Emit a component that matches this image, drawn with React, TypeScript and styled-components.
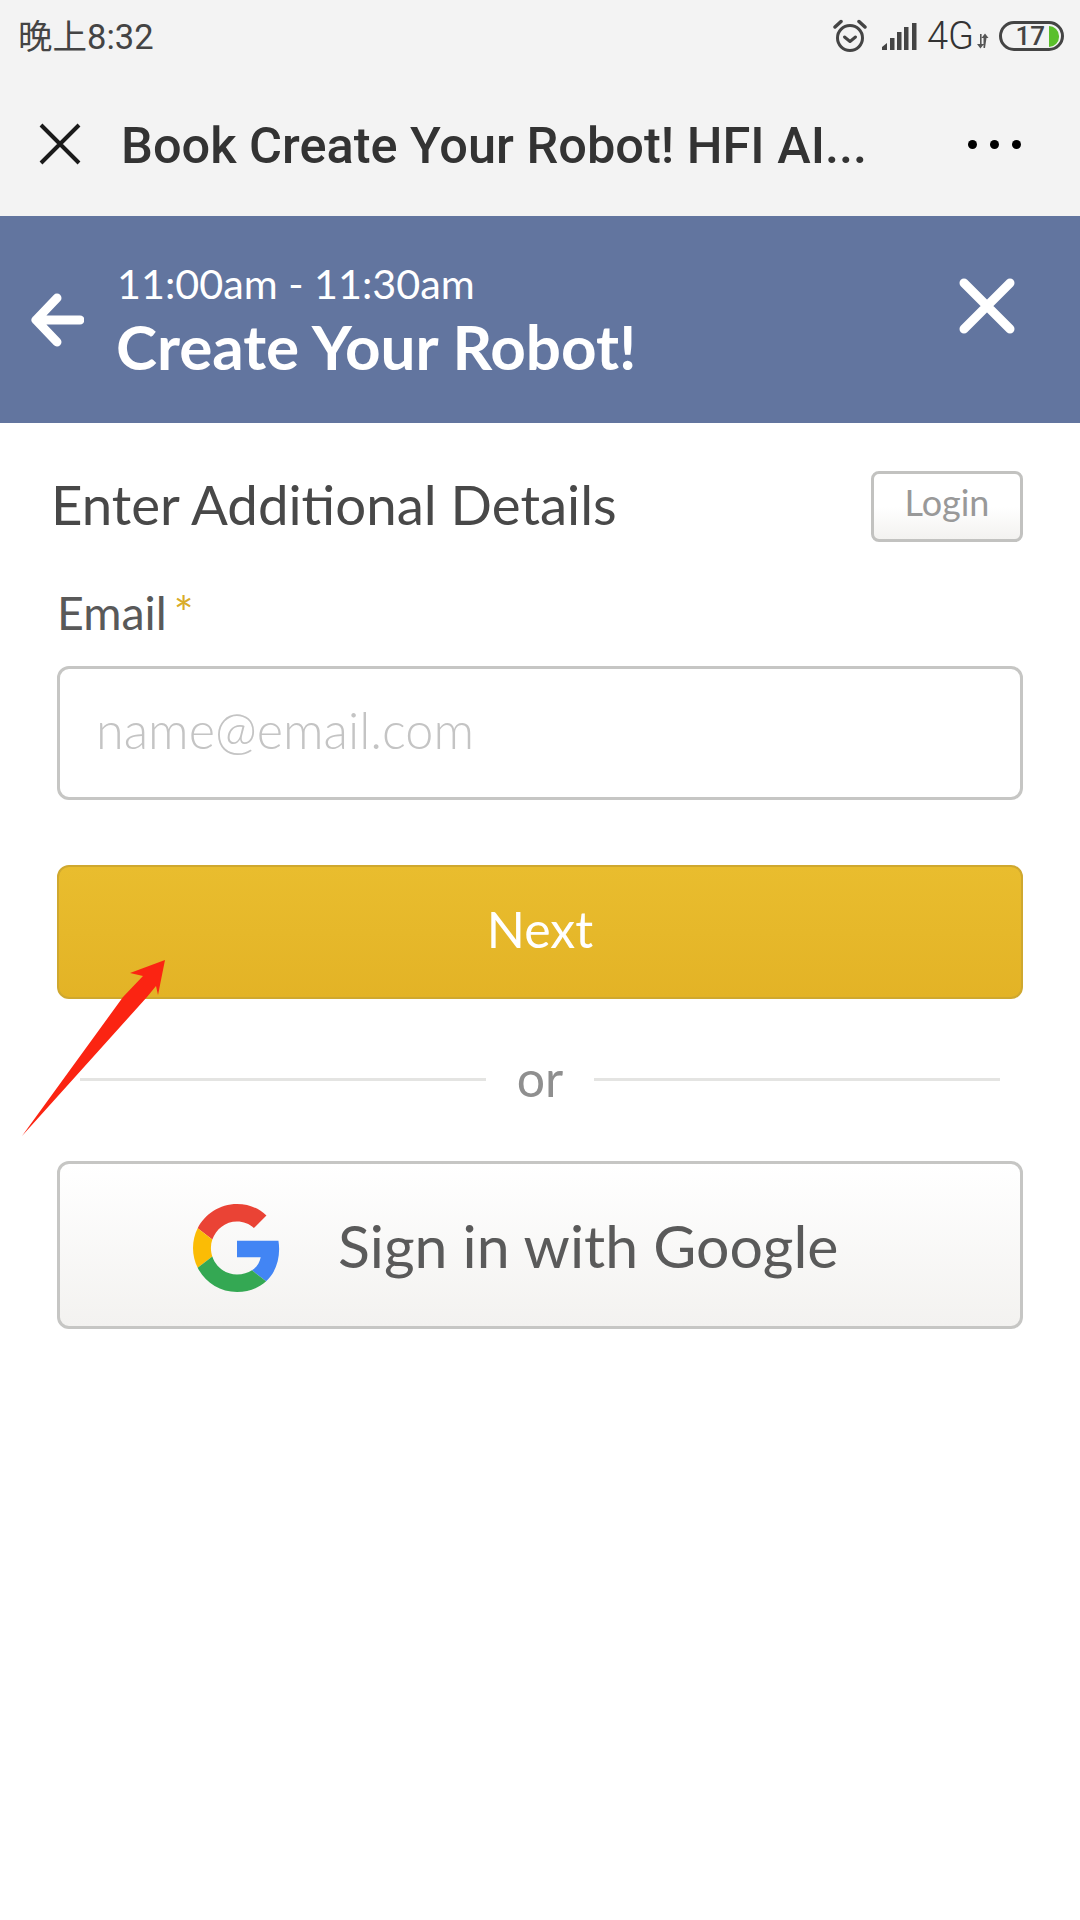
import React from "react";
import styled, { createGlobalStyle } from "styled-components";

const Global = createGlobalStyle`
  html, body { margin: 0; padding: 0; background: #fff; }
  * { box-sizing: border-box; }
`;

const Page = styled.div`
  position: relative;
  width: 1080px;
  height: 1920px;
  background: #fff;
  overflow: hidden;
  font-family: Lato, "Liberation Sans", sans-serif;
`;

const Chrome = styled.div`
  height: 216px;
  background: #f3f3f3;
  display: flex;
  flex-direction: column;
`;

const StatusBar = styled.div`
  height: 72px;
  padding: 0 16px 0 18px;
  display: flex;
  align-items: center;
  justify-content: space-between;
  color: #444;
`;

const Clock = styled.span`
  font-family: Roboto, "Noto Sans CJK SC", sans-serif;
  font-size: 34.500px;
  font-weight: 400;
  color: #444;
  margin-bottom: 4px;
`;

const StatusIcons = styled.div`
  display: flex;
  align-items: center;
`;

const AlarmIcon = styled.svg`
  flex: none;
`;

const SignalIcon = styled.svg`
  flex: none;
  margin-left: 13px;
`;

const ArrowsIcon = styled.svg`
  flex: none;
  margin: 10px 0 0 3px;
`;

const NetLabel = styled.span`
  font-family: Roboto, sans-serif;
  font-size: 38px;
  font-weight: 300;
  color: #333;
  margin-left: 7px;
`;

const Battery = styled.div`
  width: 65px;
  height: 30px;
  margin-left: 10px;
  border: 3px solid #444;
  border-radius: 15px;
  display: flex;
  align-items: center;
  justify-content: flex-end;
  padding-right: 2px;
  font-family: Roboto, sans-serif;
  font-size: 26px;
  font-weight: 500;
  color: #444;
`;

const BatteryFill = styled.span`
  width: 10px;
  height: 21px;
  margin-left: 4px;
  background: #5abf2b;
  border-radius: 0 11px 11px 0;
`;

const TitleBar = styled.div`
  flex: 1;
  display: flex;
  align-items: center;
  padding: 0 59px 0 39px;
`;

const PageTitle = styled.div`
  flex: 1;
  margin-left: 40px;
  margin-top: 3px;
  font-family: Roboto, sans-serif;
  font-size: 50.500px;
  font-weight: 500;
  color: #333;
  white-space: nowrap;
`;

const Dots = styled.div`
  display: flex;
  gap: 13px;
`;

const Dot = styled.span`
  width: 9px;
  height: 9px;
  border-radius: 50%;
  background: #000;
`;

const Banner = styled.header`
  height: 207px;
  background: #62759f;
  display: flex;
  align-items: center;
  padding: 0 65px 6px 30px;
  color: #fff;
`;

const BannerText = styled.div`
  flex: 1;
  margin-left: 33px;
  margin-top: 11px;
`;

const BannerTime = styled.div`
  font-size: 41.300px;
  line-height: 48px;
  font-weight: 400;
`;

const BannerTitle = styled.div`
  font-size: 62px;
  line-height: 78px;
  font-weight: 700;
  margin-left: -1px;
`;

const BackIcon = styled.svg`
  margin-top: 7px;
  flex: none;
`;

const CloseIcon = styled.svg`
  margin-bottom: 22px;
  flex: none;
`;

const Content = styled.main`
  padding: 48px 57px 0;
`;

const HeadRow = styled.div`
  height: 71px;
  display: flex;
  align-items: center;
  justify-content: space-between;
  margin-left: -6px;
`;

const Heading = styled.h1`
  margin: 0 0 5px;
  font-size: 54.600px;
  font-weight: 400;
  color: #484848;
`;

const LoginButton = styled.button`
  width: 152px;
  height: 71px;
  border: 3px solid #c2c2c0;
  border-radius: 8px;
  background: linear-gradient(#fff 50%, #f3f2f0);
  font-family: inherit;
  font-size: 36px;
  color: #999;
  padding: 0 0 10px;
`;

const FieldLabel = styled.label`
  display: block;
  margin-top: 42px;
  font-size: 46.500px;
  line-height: 56px;
  color: #595959;
`;

const Required = styled.span`
  color: #d9ab28;
  margin-left: 7px;
`;

const Input = styled.input`
  display: block;
  width: 100%;
  height: 134px;
  margin-top: 26px;
  padding: 0 36px 7px;
  border: 3px solid #c6c6c4;
  border-radius: 12px;
  background: #fff;
  font-family: inherit;
  font-size: 50.400px;
  font-weight: 300;
  &::placeholder { color: #c4c4c4; opacity: 1; }
`;

const NextButton = styled.button`
  display: block;
  width: 100%;
  height: 134px;
  margin-top: 65px;
  padding: 0 0 7px;
  border: 2px solid #cfa82f;
  border-radius: 12px;
  background: linear-gradient(#e9bd2e, #e3b326);
  color: #fff;
  font-family: inherit;
  font-size: 50px;
  font-weight: 400;
`;

const Divider = styled.div`
  height: 162px;
  display: flex;
  align-items: center;
  padding: 0 23px 2px;
  gap: 31px;
  font-size: 50px;
  color: #8f8f8f;
`;

const OrLabel = styled.span`
  margin-bottom: 2px;
`;

const Rule = styled.span`
  flex: 1;
  height: 3px;
  background: #e4e4e2;
`;

const GoogleButton = styled.button`
  display: flex;
  align-items: center;
  width: 100%;
  height: 168px;
  padding: 0 0 0 133px;
  border: 3px solid #c6c6c4;
  border-radius: 12px;
  background: linear-gradient(#fff, #f3f2f0);
  font-family: inherit;
  font-size: 59px;
  color: #5a5a5a;
`;

const GoogleMark = styled.svg`
  flex: none;
  margin-top: 5px;
`;

const GoogleText = styled.span`
  margin-left: 57px;
`;

const Arrow = styled.svg`
  position: absolute;
  left: 0;
  top: 840px;
`;

const App = () => (
  <Page>
    <Global />
    <Chrome>
      <StatusBar>
        <Clock>晚上8:32</Clock>
        <StatusIcons>
          <AlarmIcon width="34" height="34" viewBox="0 0 34 34" fill="none" stroke="#444" strokeWidth="3">
            <circle cx="17" cy="19" r="12.500" />
            <path d="M11.500 18l5.500 4.500 5.500-4.500" strokeLinecap="round" strokeLinejoin="round" />
            <path d="M2 8l6-5.500M32 8l-6-5.500" strokeWidth="3.500" strokeLinecap="round" />
          </AlarmIcon>
          <SignalIcon width="40" height="30" viewBox="0 0 38 30" fill="#444">
            <path d="M1 29v-3l5-4v7zM9 29V17h4.500v12zM16 29V11h4.500v18zM23 29V6h4.500v23zM31 29V2h4.500v27z" />
          </SignalIcon>
          <NetLabel>4G</NetLabel>
          <ArrowsIcon width="12" height="16" viewBox="0 0 12 16" fill="#555">
            <path d="M3 1h1.600v10H7L3.400 15.500 0 11h3zM8 15h-1.500V5H4.500L8 0.500 11.500 5H9.500z" />
          </ArrowsIcon>
          <Battery>
            17
            <BatteryFill />
          </Battery>
        </StatusIcons>
      </StatusBar>
      <TitleBar>
        <svg width="42" height="42" viewBox="0 0 42 42" stroke="#1a1a1a" strokeWidth="4">
          <path d="M2 2l38 38M40 2L2 40" />
        </svg>
        <PageTitle>Book Create Your Robot! HFI AI...</PageTitle>
        <Dots>
          <Dot />
          <Dot />
          <Dot />
        </Dots>
      </TitleBar>
    </Chrome>
    <Banner>
      <BackIcon width="54" height="54" viewBox="0 0 54 54" fill="none" stroke="#fff" strokeWidth="9" strokeLinecap="round" strokeLinejoin="round">
        <path d="M50 27H6M27 5L6 27l21 22" />
      </BackIcon>
      <BannerText>
        <BannerTime>11:00am - 11:30am</BannerTime>
        <BannerTitle>Create Your Robot!</BannerTitle>
      </BannerText>
      <CloseIcon width="56" height="56" viewBox="0 0 56 56" fill="none" stroke="#fff" strokeWidth="9" strokeLinecap="round">
        <path d="M5 5l46 46M51 5L5 51" />
      </CloseIcon>
    </Banner>
    <Content>
      <HeadRow>
        <Heading>Enter Additional Details</Heading>
        <LoginButton>Login</LoginButton>
      </HeadRow>
      <FieldLabel htmlFor="email">
        Email<Required>*</Required>
      </FieldLabel>
      <Input id="email" placeholder="name@email.com" />
      <NextButton>Next</NextButton>
      <Divider>
        <Rule />
        <OrLabel>or</OrLabel>
        <Rule />
      </Divider>
      <GoogleButton>
        <GoogleMark width="88" height="90" viewBox="0 0 48 48">
          <path fill="#ea4335" d="M24 9.500c3.540 0 6.710 1.220 9.210 3.600l6.850-6.850C35.900 2.380 30.470 0 24 0 14.620 0 6.510 5.380 2.560 13.220l7.980 6.190C12.430 13.720 17.740 9.500 24 9.500z" />
          <path fill="#4285f4" d="M46.980 24.550c0-1.570-.15-3.090-.38-4.550H24v9.020h12.940c-.58 2.960-2.260 5.480-4.780 7.180l7.730 6c4.510-4.180 7.090-10.360 7.090-17.650z" />
          <path fill="#fbbc05" d="M10.530 28.590c-.48-1.450-.76-2.990-.76-4.590s.27-3.140.76-4.590l-7.980-6.190C.92 16.460 0 20.120 0 24c0 3.880.92 7.540 2.560 10.780l7.970-6.190z" />
          <path fill="#34a853" d="M24 48c6.480 0 11.930-2.130 15.890-5.810l-7.730-6c-2.150 1.450-4.920 2.300-8.160 2.300-6.260 0-11.570-4.220-13.470-9.910l-7.980 6.190C6.510 42.620 14.620 48 24 48z" />
        </GoogleMark>
        <GoogleText>Sign in with Google</GoogleText>
      </GoogleButton>
    </Content>
    <Arrow width="180" height="300" viewBox="0 0 180 300">
      <path fill="#fb2412" d="M22 296L123 157 143 136 130 133 165 120 158 155 156 146 147 157Z" />
    </Arrow>
  </Page>
);

export default App;
